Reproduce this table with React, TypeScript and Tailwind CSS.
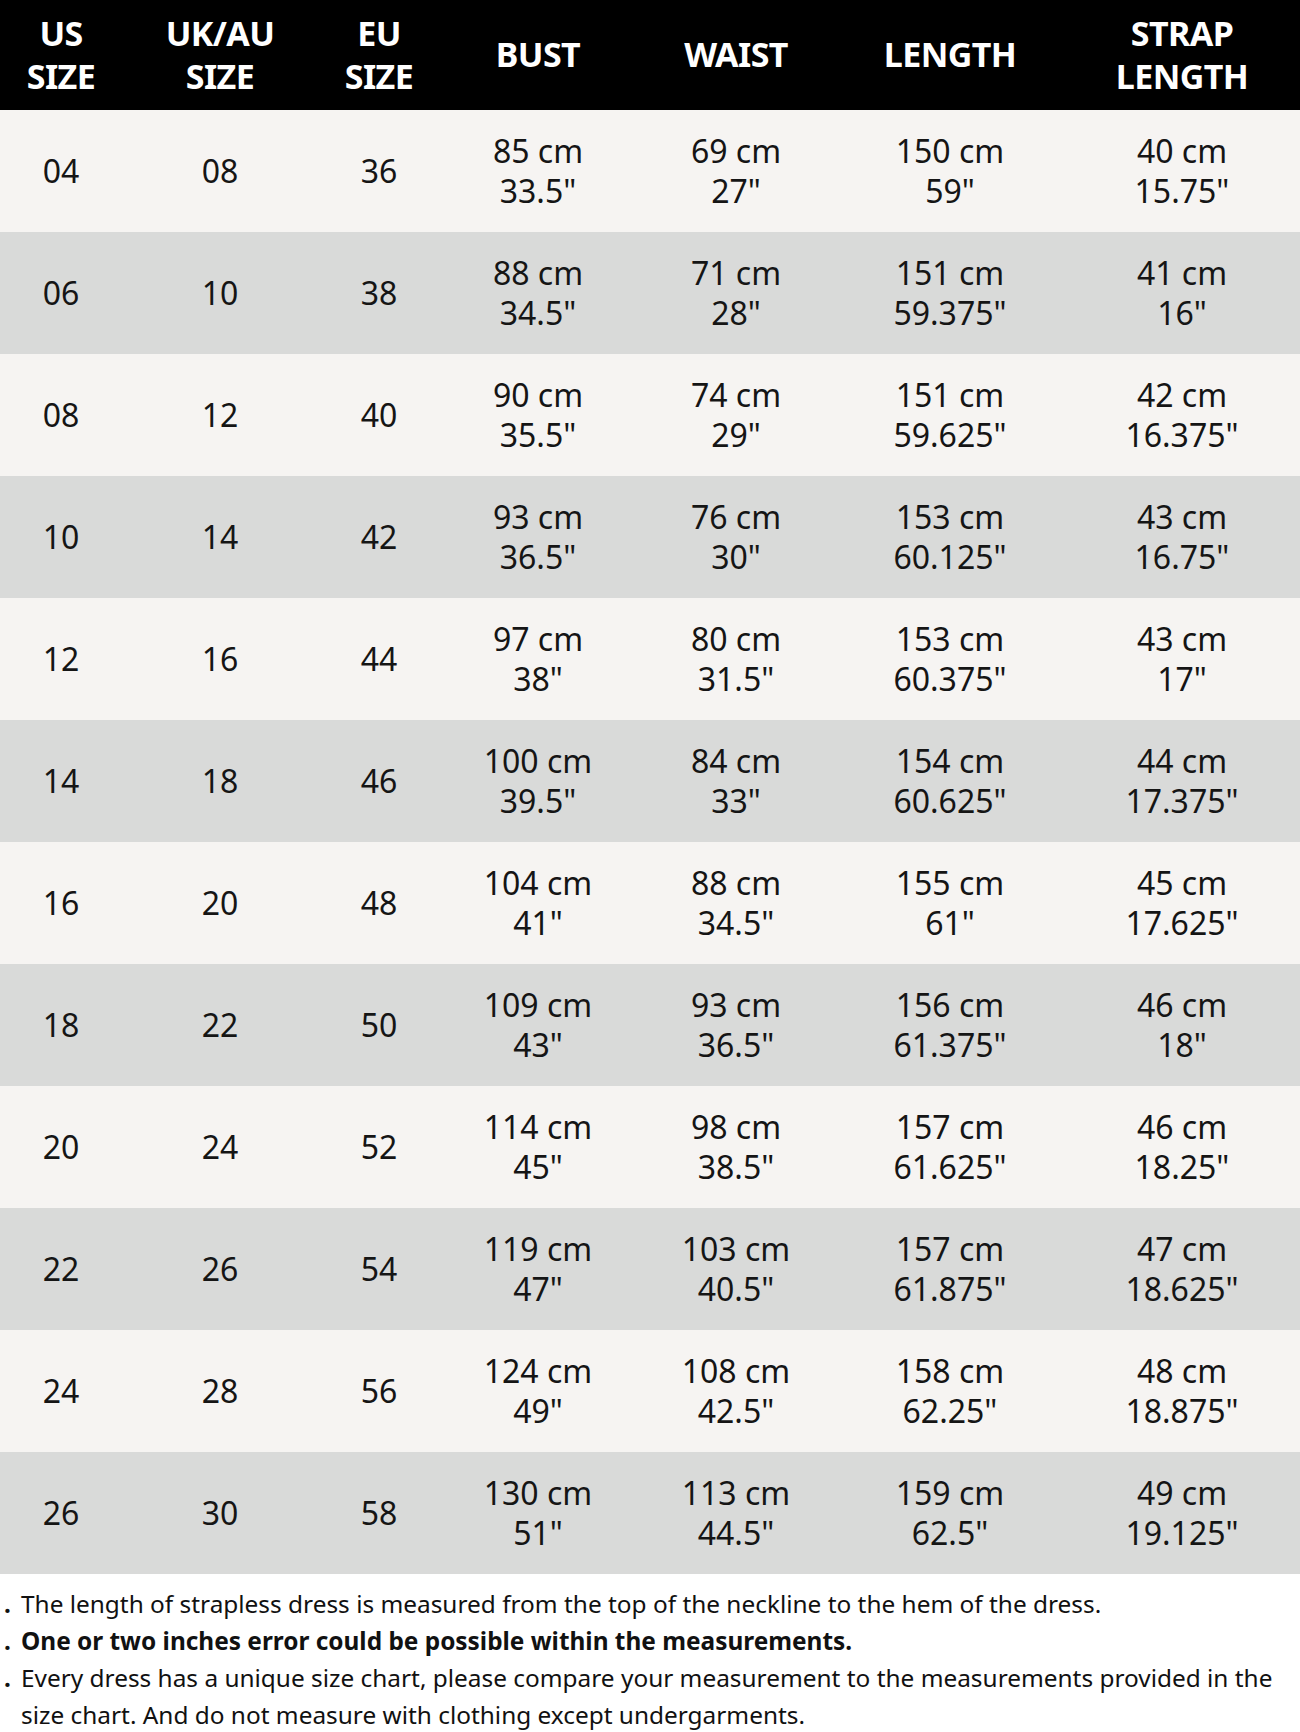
const font = "font-['Noto_Sans','Open_Sans',sans-serif]";

const cols = "grid grid-cols-[122px_196px_122px_196px_200px_228px_236px]";

const headers: string[][] = [
  ["US", "SIZE"],
  ["UK/AU", "SIZE"],
  ["EU", "SIZE"],
  ["BUST"],
  ["WAIST"],
  ["LENGTH"],
  ["STRAP", "LENGTH"],
];

type Row = [string, string, string, [string, string], [string, string], [string, string], [string, string]];

const rows: Row[] = [
  ["04", "08", "36", ["85 cm", '33.5"'], ["69 cm", '27"'], ["150 cm", '59"'], ["40 cm", '15.75"']],
  ["06", "10", "38", ["88 cm", '34.5"'], ["71 cm", '28"'], ["151 cm", '59.375"'], ["41 cm", '16"']],
  ["08", "12", "40", ["90 cm", '35.5"'], ["74 cm", '29"'], ["151 cm", '59.625"'], ["42 cm", '16.375"']],
  ["10", "14", "42", ["93 cm", '36.5"'], ["76 cm", '30"'], ["153 cm", '60.125"'], ["43 cm", '16.75"']],
  ["12", "16", "44", ["97 cm", '38"'], ["80 cm", '31.5"'], ["153 cm", '60.375"'], ["43 cm", '17"']],
  ["14", "18", "46", ["100 cm", '39.5"'], ["84 cm", '33"'], ["154 cm", '60.625"'], ["44 cm", '17.375"']],
  ["16", "20", "48", ["104 cm", '41"'], ["88 cm", '34.5"'], ["155 cm", '61"'], ["45 cm", '17.625"']],
  ["18", "22", "50", ["109 cm", '43"'], ["93 cm", '36.5"'], ["156 cm", '61.375"'], ["46 cm", '18"']],
  ["20", "24", "52", ["114 cm", '45"'], ["98 cm", '38.5"'], ["157 cm", '61.625"'], ["46 cm", '18.25"']],
  ["22", "26", "54", ["119 cm", '47"'], ["103 cm", '40.5"'], ["157 cm", '61.875"'], ["47 cm", '18.625"']],
  ["24", "28", "56", ["124 cm", '49"'], ["108 cm", '42.5"'], ["158 cm", '62.25"'], ["48 cm", '18.875"']],
  ["26", "30", "58", ["130 cm", '51"'], ["113 cm", '44.5"'], ["159 cm", '62.5"'], ["49 cm", '19.125"']],
];

function Cell({ lines }: { lines: string[] }) {
  return (
    <div className="flex flex-col items-center justify-center text-[32px] leading-[40px]">
      {lines.map((line) => (
        <span key={line}>{line}</span>
      ))}
    </div>
  );
}

export default function App() {
  return (
    <div className={`${font} w-[1300px] bg-white text-[#151515]`}>
      <div className={`${cols} h-[110px] bg-black text-white`}>
        {headers.map((h) => (
          <div
            key={h.join(" ")}
            className="flex flex-col items-center justify-center pb-[1px] text-[34px] font-bold leading-[43px] tracking-[-0.6px]"
          >
            {h.map((line) => (
              <span key={line}>{line}</span>
            ))}
          </div>
        ))}
      </div>

      {rows.map((row, i) => (
        <div key={row[0]} className={`${cols} h-[122px] ${i % 2 === 0 ? "bg-[#f6f4f2]" : "bg-[#d9dad9]"}`}>
          <Cell lines={[row[0]]} />
          <Cell lines={[row[1]]} />
          <Cell lines={[row[2]]} />
          <Cell lines={row[3]} />
          <Cell lines={row[4]} />
          <Cell lines={row[5]} />
          <Cell lines={row[6]} />
        </div>
      ))}

      <div className="pl-[4px] pt-[11px] text-[24.4px] leading-[37px] text-[#111]">
        <div className="flex">
          <span className="w-[17px] shrink-0 font-bold">.</span>
          <span>The length of strapless dress is measured from the top of the neckline to the hem of the dress.</span>
        </div>
        <div className="flex font-bold">
          <span className="w-[17px] shrink-0">.</span>
          <span>One or two inches error could be possible within the measurements.</span>
        </div>
        <div className="flex">
          <span className="w-[17px] shrink-0 font-bold">.</span>
          <span>
            Every dress has a unique size chart, please compare your measurement to the measurements provided in the
            <br />
            size chart. And do not measure with clothing except undergarments.
          </span>
        </div>
      </div>
    </div>
  );
}
